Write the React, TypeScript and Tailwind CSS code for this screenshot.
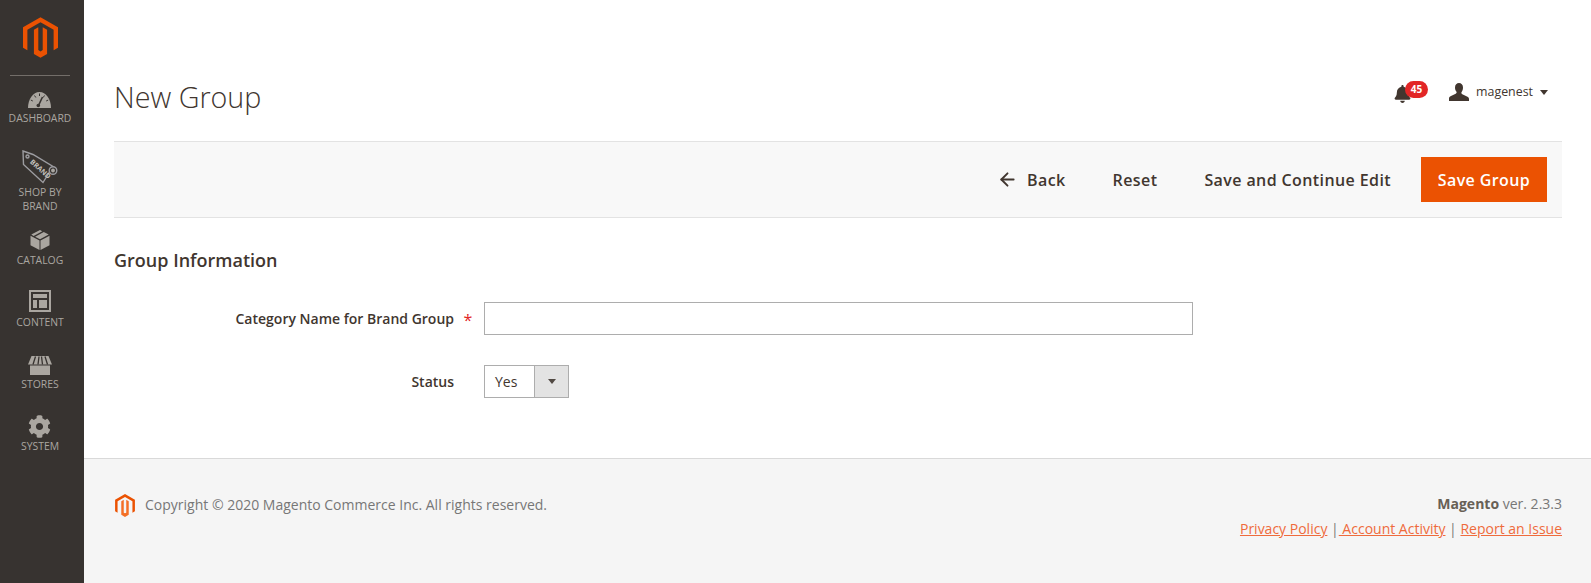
import { ArrowLeft } from "lucide-react";
import { FaBell, FaCog } from "react-icons/fa";

const Logo = ({ className, c1 = "#eb5202", c2 = "#eb5202" }: { className: string; c1?: string; c2?: string }) => (
  <svg viewBox="0 0 100 116" className={className}>
    <path fill={c1} d="M50 0 100 29V87L87.5 94.2V36.2L50 14.5 12.5 36.2V94.2L0 87V29Z" />
    <path fill={c2} d="M50 116 31.2 105V36.2L43.7 29V94L50 97.7 56.3 94V29L68.8 36.2V105Z" />
  </svg>
);

const Gauge = () => (
  <svg viewBox="0 0 23 16" className="w-[23px] h-[16px]">
    <path fill="#aaa6a0" d="M0 16C0 7 5 0 11.500 0S23 7 23 16Z" />
    <path stroke="#373330" strokeWidth="1" d="M11.500 1.500v2.500M6.500 3.500l1.300 2M16.500 3.500l-1.300 2M2.800 8l2 1M20.200 8l-2 1" />
    <path stroke="#373330" strokeWidth="1.600" d="M10.500 13.500 14.500 5" />
    <circle cx="10.300" cy="13.500" r="1.800" fill="#373330" />
  </svg>
);

const Tag = () => (
  <svg viewBox="0 0 40 36" className="w-[40px] h-[36px] mb-[-2px] ml-[1px]">
    <g fill="none" stroke="#9c9ca0" strokeWidth="1.400">
      <path d="M3 2 13 5.500 33 17.500 23 33.500 3.500 15.500Z" />
      <circle cx="7.500" cy="7.500" r="1.500" />
      <circle cx="33" cy="21.500" r="3.800" fill="#373330" />
    </g>
    <circle cx="33" cy="21.500" r="1.900" fill="#aaa6a0" />
    <text x="0" y="0" transform="translate(9.500 13.500) rotate(42)" fontSize="7" fontWeight="700" fill="#c4c1bc" fontFamily="'Open Sans', sans-serif">BRAND</text>
  </svg>
);

const Cube = () => (
  <svg viewBox="0 0 20 20" className="w-[20px] h-[20px]">
    <path fill="#aaa6a0" d="M.5 5.800 9.500 10.500V20L.5 15.300ZM19.500 5.800 10.500 10.500V20L19.500 15.300ZM10 0 12.300 1.200 3.600 5.900 1.300 4.600ZM13.800 2 18.700 4.600 10 9.300 5.100 6.700Z" />
  </svg>
);

const Layout = () => (
  <svg viewBox="0 0 22 22" className="w-[22px] h-[22px]">
    <path fill="#aaa6a0" fillRule="evenodd" d="M0 0H22V22H0ZM2 2V20H20V2Z" />
    <path fill="#aaa6a0" d="M4 4H18V8H4ZM4 10H8V18H4ZM10 10H18V18H10Z" />
  </svg>
);

const Store = () => (
  <svg viewBox="0 0 24 19" className="w-[24px] h-[19px]">
    <path fill="#aaa6a0" d="M3.500 0H20.500L24 8.500H0ZM2 9.500H22V19H2Z" />
    <path stroke="#373330" strokeWidth="1.300" d="M7.500 .5 5 8.500M11 .5 10 8.500M13.500 .5 14.500 8.500M17 .5 19.500 8.500" />
  </svg>
);

const Bust = () => (
  <svg viewBox="0 0 20 18" className="w-[20px] h-[18px]">
    <path fill="#41362f" d="M6 4.500C6 1.500 7.800 0 10 0s4 1.500 4 4.500c0 2-.7 3.500-1.500 4.700-.4.700 0 1.600.8 2l4.700 2.300c1.300.6 2 1.500 2 2.500V18H0v-2.500c0-1 .7-1.900 2-2.500l4.700-2.300c.8-.4 1.200-1.300.8-2C6.700 8 6 6.500 6 4.500Z" />
  </svg>
);

const items: { label: string[]; icon: React.ReactNode; h: string; mt: string }[] = [
  { label: ["DASHBOARD"], icon: <Gauge />, h: "h-[57px]", mt: "mt-[3px]" },
  { label: ["SHOP BY", "BRAND"], icon: <Tag />, h: "h-[81px]", mt: "mt-[2px]" },
  { label: ["CATALOG"], icon: <Cube />, h: "h-[60px]", mt: "mt-[3px]" },
  { label: ["CONTENT"], icon: <Layout />, h: "h-[66px]", mt: "mt-[3px]" },
  { label: ["STORES"], icon: <Store />, h: "h-[59px]", mt: "mt-[2px]" },
  { label: ["SYSTEM"], icon: <FaCog className="w-[23px] h-[23px] text-[#aaa6a0]" />, h: "h-[62px]", mt: "mt-[1px]" },
];

export default function App() {
  return (
    <div className="flex h-[583px] w-full overflow-hidden bg-white font-['Open_Sans',sans-serif] text-[#41362f]">
      <aside className="w-[84px] shrink-0 bg-[#373330] flex flex-col items-center pr-[4px]">
        <Logo className="w-[35px] h-[41px] mt-[17px]" />
        <div className="w-[60px] h-px bg-[#736e69] mt-[17px] mb-[16px]" />
        {items.map((it) => (
          <div key={it.label[0]} className={`${it.h} shrink-0 flex flex-col items-center`}>
            {it.icon}
            <div className={`${it.mt} text-[10.4px] leading-[14px] text-[#aaa6a0] text-center`}>
              {it.label.map((l) => (
                <div key={l}>{l}</div>
              ))}
            </div>
          </div>
        ))}
      </aside>
      <div className="flex-1 min-w-0 flex flex-col">
        <main className="h-[459px] shrink-0 pl-[30px] pr-[29px] border-b border-[#d9d9d9]">
          <header className="h-[141px] flex pt-[77px] justify-between">
            <h1 className="text-[28.7px] leading-[40px] font-[350] h-[40px]">New Group</h1>
            <div className="flex items-start pt-[1px] pr-[14px]">
              <div className="relative mr-[21px] mt-[7px]">
                <FaBell className="w-[17px] h-[18px] text-[#41362f] ml-[-1px]" />
                <span className="absolute left-[10px] top-[-4px] w-[23px] h-[17px] rounded-full bg-[#e22626] text-white text-[10px] font-bold leading-[17px] text-center">45</span>
              </div>
              <div className="ml-[17px] flex items-center mt-[5px]">
                <Bust />
                <span className="text-[12.4px] ml-[7px] mr-[7px] leading-[18px]">magenest</span>
                <span className="w-0 h-0 border-x-[4px] border-x-transparent border-t-[5px] border-t-[#41362f]" />
              </div>
            </div>
          </header>
          <div className="h-[77px] bg-[#f8f8f8] border-y border-[#e3e3e3] flex items-center justify-end pr-[15px] text-[16px] font-semibold text-[#41362f] tracking-[0.4px]">
            <ArrowLeft className="w-[21px] h-[21px] mr-[9px]" strokeWidth={2.2} />
            <span>Back</span>
            <span className="ml-[47px]">Reset</span>
            <span className="ml-[47px]">Save and Continue Edit</span>
            <span className="ml-[30px] w-[126px] h-[45px] bg-[#eb5202] text-white flex items-center justify-center">Save Group</span>
          </div>
          <h2 className="mt-[30px] text-[18px] leading-[24px] font-semibold h-[24px]">Group Information</h2>
          <div className="mt-[30px] flex items-center">
            <label className="w-[340px] shrink-0 text-right text-[14px] font-semibold">Category Name for Brand Group</label>
            <span className="w-[30px] shrink-0 text-center text-[#e22626] text-[16px] font-normal pt-[3px] pr-[2px]">*</span>
            <input aria-label="Category Name for Brand Group" className="w-[709px] h-[33px] border border-[#adadad] bg-white" />
          </div>
          <div className="mt-[30px] flex items-center">
            <label className="w-[340px] shrink-0 text-right text-[14px] font-semibold">Status</label>
            <span className="w-[30px] shrink-0" />
            <div className="w-[85px] h-[33px] border border-[#adadad] flex text-[14px]">
              <span className="flex-1 pl-[10px] leading-[31px]">Yes</span>
              <span className="w-[34px] bg-[#e3e3e3] border-l border-[#adadad] flex items-center justify-center">
                <span className="w-0 h-0 border-x-[4px] border-x-transparent border-t-[5px] border-t-[#514943]" />
              </span>
            </div>
          </div>
        </main>
        <footer className="flex-1 bg-[#f5f5f5] pl-[31px] pr-[29px] pt-[35px] flex justify-between text-[14px] text-[#777]">
          <div className="flex items-start">
            <Logo className="w-[20px] h-[23px]" c2="#f46f25" />
            <span className="ml-[10px] mt-[1px] leading-[20px]">Copyright © 2020 Magento Commerce Inc. All rights reserved.</span>
          </div>
          <div className="text-right leading-[20px]">
            <div><b className="font-bold text-[#676056]">Magento</b> ver. 2.3.3</div>
            <div className="mt-[5px] text-[#777] whitespace-pre">
              <a className="text-[#ef6b3c] underline">Privacy Policy</a>{" |"}<a className="text-[#ef6b3c] underline">{" Account Activity"}</a>{" | "}<a className="text-[#ef6b3c] underline">Report an Issue</a>
            </div>
          </div>
        </footer>
      </div>
    </div>
  );
}
